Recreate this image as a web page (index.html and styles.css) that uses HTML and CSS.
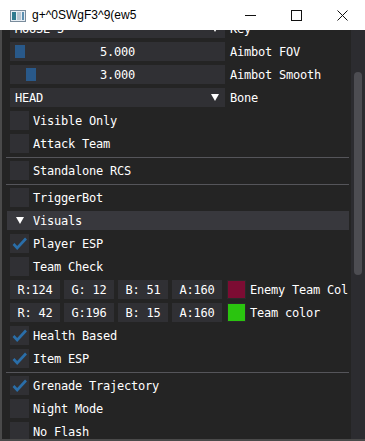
FILE: index.html
```html
<!DOCTYPE html>
<html lang="en">
<head>
  <meta charset="UTF-8" />
  <title>g+^0SWgF3^9(ew5</title>
  <link rel="stylesheet" href="styles.css">
</head>
<body>
  <div class="titlebar">
    <svg class="app-icon" width="16" height="12" viewBox="0 0 16 12">
      <rect x="0.5" y="0.5" width="15" height="11" fill="#e8eef4" stroke="#7a8c9c"/>
      <rect x="2" y="2" width="4" height="8" fill="#2f7a8f"/>
      <rect x="7" y="2" width="4" height="8" fill="#b9c7d2"/>
      <rect x="12" y="2" width="2" height="8" fill="#5c8fb0"/>
    </svg>
    <span class="title">g+^0SWgF3^9(ew5</span>
    <div class="controls">
      <div class="ctl"><svg width="11" height="11" viewBox="0 0 11 11"><path d="M0 5.5H11" stroke="#111" stroke-width="1"/></svg></div>
      <div class="ctl"><svg width="11" height="11" viewBox="0 0 11 11"><rect x="0.5" y="0.5" width="10" height="10" fill="none" stroke="#111"/></svg></div>
      <div class="ctl"><svg width="11" height="11" viewBox="0 0 11 11"><path d="M0.5 0.5L10.5 10.5M10.5 0.5L0.5 10.5" stroke="#111"/></svg></div>
    </div>
  </div>

  <div class="window">
    <div class="content">
      <div class="row first">
        <div class="frame combo"><span>MOUSE 5</span><span class="arrow"></span></div>
        <span class="label">Key</span>
      </div>
      <div class="row">
        <div class="frame slider"><span class="grab" style="margin-left:5px"></span><span class="value">5.000</span></div>
        <span class="label">Aimbot FOV</span>
      </div>
      <div class="row">
        <div class="frame slider"><span class="grab" style="margin-left:16px"></span><span class="value">3.000</span></div>
        <span class="label">Aimbot Smooth</span>
      </div>
      <div class="row">
        <div class="frame combo"><span>HEAD</span><span class="arrow"></span></div>
        <span class="label">Bone</span>
      </div>
      <div class="row"><span class="check"></span><span class="label">Visible Only</span></div>
      <div class="row"><span class="check"></span><span class="label">Attack Team</span></div>
      <div class="separator"></div>
      <div class="row"><span class="check"></span><span class="label">Standalone RCS</span></div>
      <div class="separator"></div>
      <div class="row"><span class="check"></span><span class="label">TriggerBot</span></div>
      <div class="header"><span class="arrow"></span><span>Visuals</span></div>
      <div class="row"><span class="check on"></span><span class="label">Player ESP</span></div>
      <div class="row"><span class="check"></span><span class="label">Team Check</span></div>
      <div class="row">
        <div class="channels">
          <span class="frame chan">R:124</span>
          <span class="frame chan">G: 12</span>
          <span class="frame chan">B: 51</span>
          <span class="frame chan">A:160</span>
        </div>
        <span class="swatch" style="background:rgb(124,12,51)"></span>
        <span class="label">Enemy Team Col</span>
      </div>
      <div class="row">
        <div class="channels">
          <span class="frame chan">R: 42</span>
          <span class="frame chan">G:196</span>
          <span class="frame chan">B: 15</span>
          <span class="frame chan">A:160</span>
        </div>
        <span class="swatch" style="background:rgb(42,196,15)"></span>
        <span class="label">Team color</span>
      </div>
      <div class="row"><span class="check on"></span><span class="label">Health Based</span></div>
      <div class="row"><span class="check on"></span><span class="label">Item ESP</span></div>
      <div class="separator"></div>
      <div class="row"><span class="check on"></span><span class="label">Grenade Trajectory</span></div>
      <div class="row"><span class="check"></span><span class="label">Night Mode</span></div>
      <div class="row"><span class="check"></span><span class="label">No Flash</span></div>
    </div>
    <div class="scrollbar"><div class="scroll-grab"></div></div>
  </div>
</body>
</html>
```

FILE: styles.css
```css
html, body {
  margin: 0;
  width: 365px;
  height: 441px;
  overflow: hidden;
  background: #242424;
}

.titlebar {
  height: 30px;
  background: #fff;
  display: flex;
  align-items: center;
}

.app-icon {
  margin-left: 10px;
  margin-top: 1px;
}

.title {
  margin-left: 6px;
  font-family: "Liberation Sans", Arial, sans-serif;
  font-size: 12px;
  color: #000;
}

.controls {
  margin-left: auto;
  display: flex;
}

.ctl {
  width: 46px;
  height: 30px;
  display: flex;
  align-items: center;
  justify-content: center;
}

.window {
  height: 409px;
  display: flex;
  border-left: 2px solid #4a4a4a;
  border-bottom: 2px solid #4a4a4a;
}

.content {
  flex: 1;
  overflow: hidden;
  display: flex;
  flex-direction: column;
  gap: 4px;
  padding-left: 8px;
  font-family: "DejaVu Sans Mono", monospace;
  font-size: 12px;
  letter-spacing: -0.22px;
  color: #fff;
}

.row {
  height: 19px;
  flex: none;
  display: flex;
  align-items: center;
}

.row.first {
  margin-top: -11px;
}

.frame {
  background: #303034;
  height: 19px;
  box-sizing: border-box;
}

.combo, .slider {
  width: 215px;
}

.combo {
  display: flex;
  align-items: center;
  padding-left: 5px;
  padding-right: 6px;
}

.arrow {
  margin-left: auto;
  width: 0;
  height: 0;
  border-left: 4px solid transparent;
  border-right: 4px solid transparent;
  border-top: 7px solid #fff;
}

.slider {
  display: grid;
  align-items: center;
}

.slider > span {
  grid-area: 1 / 1;
}

.grab {
  width: 10px;
  height: 13px;
  background: #29598a;
  justify-self: start;
}

.value {
  justify-self: center;
}

.label {
  margin-left: 5px;
  white-space: nowrap;
}

.row .frame + .label {
  margin-left: 5px;
}

.check {
  width: 19px;
  height: 19px;
  flex: none;
  background: #303034;
}

.check + .label {
  margin-left: 4px;
}

.check.on {
  background: #303034 url("data:image/svg+xml,%3Csvg xmlns='http://www.w3.org/2000/svg' width='19' height='19'%3E%3Cpath d='M3.5 10L7.2 14L16 4.5' fill='none' stroke='%232a6ea9' stroke-width='2.6'/%3E%3C/svg%3E") no-repeat;
}

.separator {
  height: 1px;
  margin: 0 2px -1px -4px;
  background: #55555a;
  flex: none;
}

.header {
  height: 19px;
  flex: none;
  margin: 0 2px 0 -3px;
  background: #38383d;
  display: flex;
  align-items: center;
  padding-left: 9px;
  gap: 9px;
}

.header .arrow {
  margin-left: 0;
}

.channels {
  display: flex;
  gap: 4px;
}

.chan {
  width: 50px;
  display: flex;
  align-items: center;
  justify-content: center;
}

.swatch {
  width: 19px;
  height: 19px;
  margin-left: 5px;
  box-sizing: border-box;
  border: 1px solid #2a2a2a;
}

.swatch + .label {
  margin-left: 4px;
}

.scrollbar {
  width: 14px;
  background: #2c2c30;
  flex: none;
  padding-top: 42px;
  box-sizing: border-box;
}

.scroll-grab {
  width: 8px;
  height: 203px;
  margin-left: 3px;
  border-radius: 4px;
  background: #4d4d52;
}
```
